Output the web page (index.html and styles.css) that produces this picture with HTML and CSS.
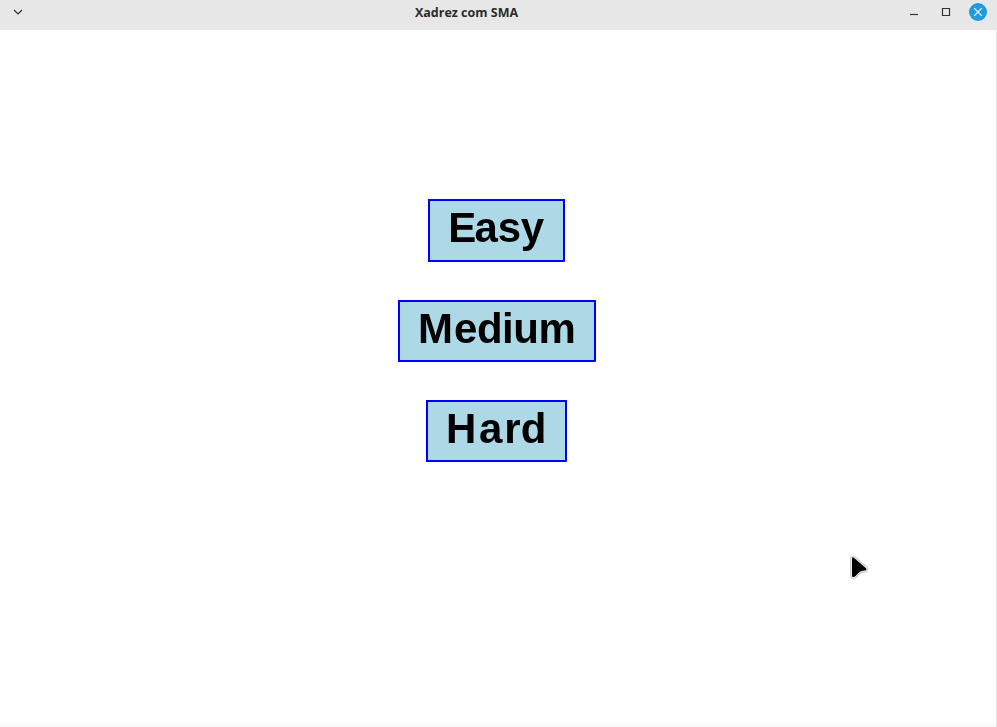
FILE: index.html
```html
<!DOCTYPE html>
<html lang="pt">
<head>
<meta charset="utf-8">
<title>Xadrez com SMA</title>
<link rel="stylesheet" href="styles.css">
</head>
<body>
<div class="window">
  <header class="titlebar">
    <svg class="menu" width="12" height="8" viewBox="0 0 12 8"><path d="M2 2l4 4 4-4"/></svg>
    <h1 class="title">Xadrez com SMA</h1>
    <div class="controls">
      <svg width="10" height="24" viewBox="0 0 10 24"><path d="M1 14.5h8"/></svg>
      <svg width="10" height="24" viewBox="0 0 10 24"><path d="M1.5 8.5h7v7h-7z"/></svg>
      <svg width="18" height="24" viewBox="0 0 18 24"><circle cx="9" cy="12" r="9"/><path class="cross" d="M5.2 8.2l7.6 7.6M12.8 8.2l-7.6 7.6"/></svg>
    </div>
  </header>
  <main class="levels">
    <button class="level easy"><span class="label"><span class="cap">E</span>asy</span></button>
    <button class="level medium"><span class="label"><span class="cap">M</span>edium</span></button>
    <button class="level hard"><span class="label"><span class="cap">H</span><span class="wide">a</span>rd</span></button>
  </main>
  <svg class="cursor" width="20" height="26" viewBox="0 0 20 26"><path d="M2 2.2Q2 .8 3.6 1.6L16 12.2Q17.3 14 15 14.4Q11 14.4 9 16.5L5 20.5Q2 22.4 2 19.5z"/></svg>
</div>
</body>
</html>
```
FILE: styles.css
```css
* { box-sizing: border-box; }
body { margin: 0; background: #fff; }
.window {
  position: relative;
  height: 727px;
  display: flex;
  flex-direction: column;
  overflow: hidden;
}
.titlebar {
  height: 30px;
  flex: none;
  background: #e7e7e7;
  display: grid;
  grid-template-columns: 100px 1fr 100px;
  padding: 0 10px 6px 12px;
  align-items: center;
}
.titlebar svg { fill: none; stroke: #333; stroke-width: 1.2; display: block; }
.title {
  margin: 0;
  height: 24px;
  text-align: center;
  font: 700 12.5px/26px "Open Sans", "Noto Sans", sans-serif;
  color: #2b2b2b;
  padding-right: 66px;
}
.controls { display: flex; justify-content: flex-end; gap: 22px; }
.controls svg:nth-child(2) { margin-right: -4px; }
.titlebar circle { fill: #1e9cdd; stroke: none; }
.titlebar .cross { stroke: #fff; }
.levels {
  flex: 1;
  display: flex;
  flex-direction: column;
  align-items: center;
  gap: 38px;
  padding: 169px 3px 0 0;
  border-right: 1px solid #e7e7e7;
  background: linear-gradient(#fff, #f7f7f7) bottom / 100% 5px no-repeat #fff;
}
.level {
  margin: 0;
  height: 62px;
  border: 2px solid #00f;
  border-bottom-right-radius: 1px;
  background: #add8e6;
  color: #000;
  font: 700 42px/54px "Liberation Sans", Arial, sans-serif;
  padding: 0 0 5px 18px;
  text-align: left;
  white-space: nowrap;
}
.label { display: inline-block; transform: scaleY(1.03); }
.easy { width: 137px; height: 63px; padding-left: 18.2px; padding-bottom: 8px; letter-spacing: -0.3px; }
.easy .cap { letter-spacing: -1.6px; }
.medium { width: 198px; padding-left: 18.4px; letter-spacing: -0.5px; }
.medium .cap { letter-spacing: 1.2px; }
.hard { width: 141px; }
.hard .cap { letter-spacing: 2.6px; }
.hard .wide { letter-spacing: 2px; }
.cursor { position: absolute; left: 850px; top: 556px; }
.cursor path { fill: #000; stroke: #fff; stroke-width: 1.6; paint-order: stroke; filter: drop-shadow(0 0 1px #555); }
```
